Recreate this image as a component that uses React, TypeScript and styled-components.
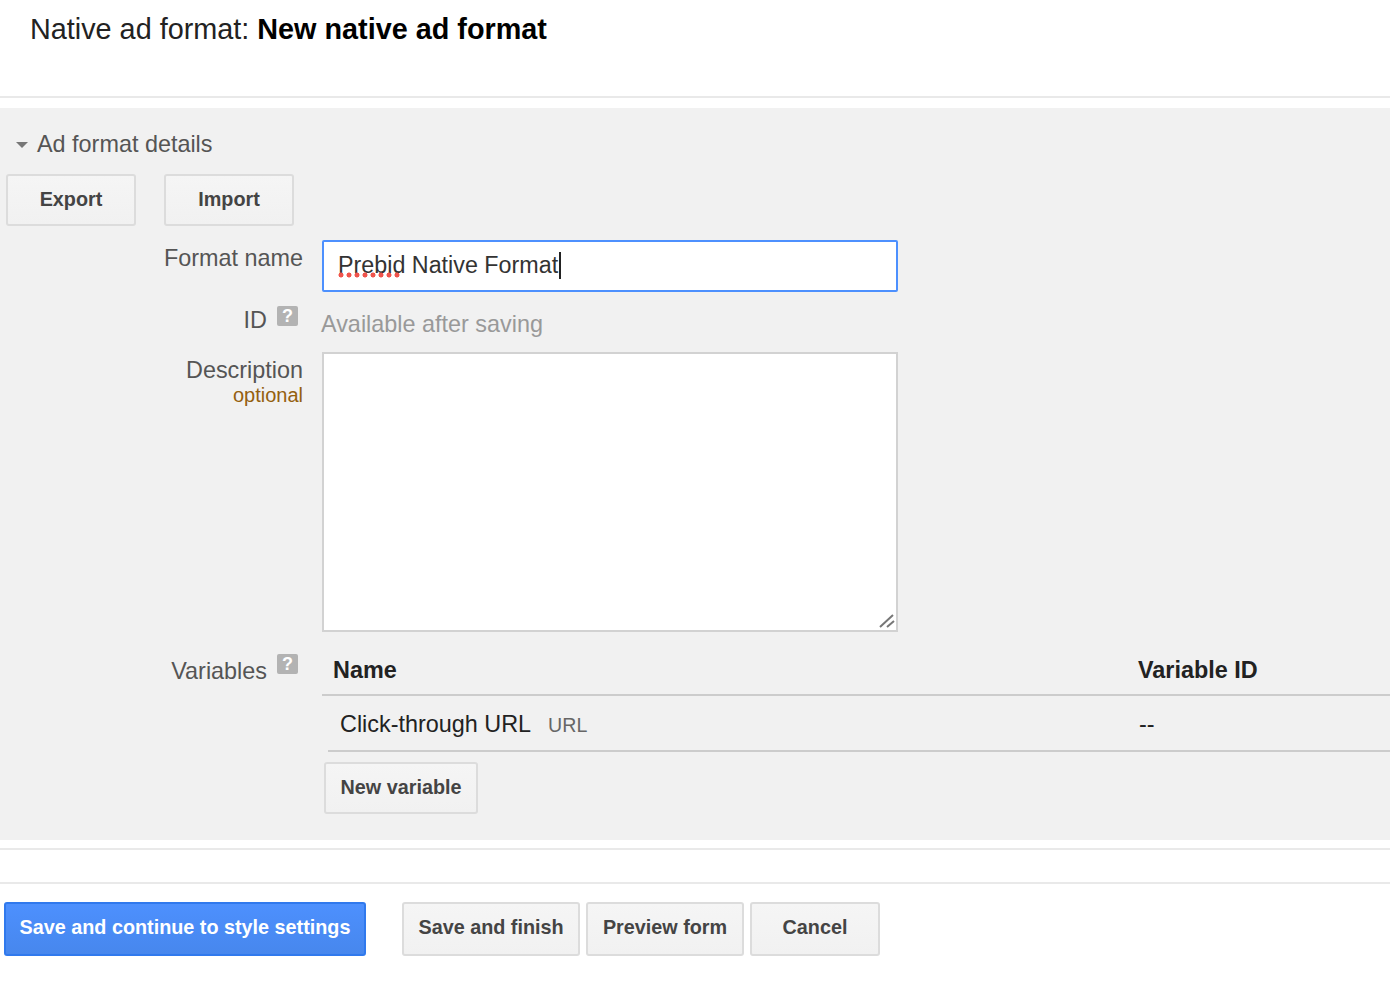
import styled, { createGlobalStyle } from 'styled-components';

const GlobalStyle = createGlobalStyle`
  html, body {
    margin: 0;
    padding: 0;
    background: #fff;
    font-family: "Liberation Sans", Arial, sans-serif;
    color: #444;
  }
  * { box-sizing: border-box; }
`;

const Page = styled.div`
  width: 1390px;
  height: 984px;
  overflow: hidden;
`;

const Header = styled.div`
  height: 98px;
  padding: 12px 0 0 30px;
  border-bottom: 2px solid #e9e9e9;
`;

const Title = styled.h1`
  margin: 0;
  font-size: 28.8px;
  line-height: 34px;
  font-weight: 400;
  color: #222;
  b { color: #000; }
`;

const Panel = styled.section`
  margin-top: 10px;
  height: 732px;
  background: #f1f1f1;
  padding-top: 22px;
`;

const SectionHead = styled.div`
  display: flex;
  align-items: center;
  height: 28px;
  padding-left: 16px;
  font-size: 23.4px;
  color: #555;
`;

const Caret = styled.span`
  width: 0;
  height: 0;
  margin: 2px 9px 0 0;
  border-left: 6px solid transparent;
  border-right: 6px solid transparent;
  border-top: 6px solid #777;
`;

const ButtonRow = styled.div`
  display: flex;
  gap: 28px;
  margin-top: 16px;
  padding-left: 6px;
`;

const Button = styled.button<{ $w: number }>`
  width: ${(p) => p.$w}px;
  height: 52px;
  padding: 0 0 2px;
  font-family: inherit;
  font-size: 19.8px;
  font-weight: 700;
  color: #444;
  background: linear-gradient(#f5f5f5, #f1f1f1);
  border: 2px solid #dcdcdc;
  border-radius: 3px;
`;

const Row = styled.div<{ $h: number; $top: number }>`
  display: grid;
  grid-template-columns: 322px 1fr;
  height: ${(p) => p.$h}px;
  margin-top: ${(p) => p.$top}px;
`;

const LabelCell = styled.div<{ $pad: number }>`
  display: flex;
  flex-direction: column;
  align-items: flex-end;
  padding: ${(p) => p.$pad}px 19px 0 0;
  font-size: 23.4px;
  line-height: 28px;
  color: #555;
`;

const LabelLine = styled.div`
  display: flex;
  align-items: flex-start;
`;

const Optional = styled.div`
  font-size: 20px;
  line-height: 24px;
  margin-top: -1px;
  color: #94600f;
`;

const Help = styled.span<{ $lift: number }>`
  display: flex;
  align-items: center;
  justify-content: center;
  width: 21px;
  height: 20px;
  margin: ${(p) => -p.$lift}px 5px 0 10px;
  background: #b3b3b3;
  border-radius: 2px;
  color: #fff;
  font-size: 18px;
  font-weight: 700;
  line-height: 20px;
`;

const NameInput = styled.div`
  display: flex;
  align-items: center;
  width: 576px;
  height: 52px;
  padding: 0 0 2px 14px;
  background: #fff;
  border: 2px solid #4d90fe;
  border-radius: 2px;
  font-size: 23.3px;
  color: #333;
`;

const Misspelled = styled.span`
  position: relative;

  &::after {
    content: '';
    position: absolute;
    left: 0;
    right: 3px;
    bottom: 1px;
    height: 6px;
    background: radial-gradient(circle at 3px 3px, #f0544c 2.2px, transparent 2.8px) 0 0 / 8px 6px repeat-x;
  }
`;

const Cursor = styled.span`
  width: 2px;
  height: 27px;
  margin-left: 1px;
  background: #222;
`;

const Muted = styled.div`
  margin: 18px 0 0 -1px;
  font-size: 23.4px;
  line-height: 28px;
  color: #999;
`;

const DescriptionBox = styled.div`
  position: relative;
  width: 576px;
  height: 280px;
`;

const Description = styled.textarea`
  display: block;
  width: 100%;
  height: 100%;
  background: #fff;
  border: 2px solid #d2d2d2;
  border-radius: 0;
  outline: none;
  resize: none;
`;

const Grip = styled.svg`
  position: absolute;
  right: 2px;
  bottom: 2px;
  width: 18px;
  height: 18px;
`;

const TableArea = styled.div`
  display: flex;
  flex-direction: column;
`;

const HeadRow = styled.div`
  display: grid;
  grid-template-columns: 805px 1fr;
  height: 48px;
  padding: 8px 0 0 11px;
  border-bottom: 2px solid #ccc;
  font-size: 23.4px;
  line-height: 28px;
  font-weight: 700;
  color: #222;
`;

const BodyRow = styled.div`
  display: grid;
  grid-template-columns: 799px 1fr;
  height: 56px;
  margin-left: 6px;
  padding: 14px 0 0 12px;
  border-bottom: 2px solid #ccc;
  font-size: 23.4px;
  line-height: 28px;
  color: #222;
`;

const TypeTag = styled.span`
  margin-left: 17px;
  font-size: 19.6px;
  color: #666;
`;

const NewVariable = styled(Button)`
  margin: 10px 0 0 2px;
`;

const Rule = styled.div<{ $top: number }>`
  height: 2px;
  margin-top: ${(p) => p.$top}px;
  background: #e9e9e9;
`;

const Footer = styled.div`
  display: flex;
  gap: 6px;
  margin-top: 18px;
  padding-left: 4px;
`;

const FooterButton = styled(Button)`
  height: 54px;
  padding-bottom: 4px;
`;

const PrimaryButton = styled(FooterButton)`
  margin-right: 30px;
  color: #fff;
  background: linear-gradient(#4d90fe, #4787ed);
  border: 2px solid #3079ed;
`;

export default function App() {
  return (
    <Page>
      <GlobalStyle />
      <Header>
        <Title>
          Native ad format: <b>New native ad format</b>
        </Title>
      </Header>
      <Panel>
        <SectionHead>
          <Caret />
          Ad format details
        </SectionHead>
        <ButtonRow>
          <Button $w={130}>Export</Button>
          <Button $w={130}>Import</Button>
        </ButtonRow>
        <Row $h={52} $top={14}>
          <LabelCell $pad={4}>Format name</LabelCell>
          <NameInput>
            <Misspelled>Prebid</Misspelled>&nbsp;Native Format
            <Cursor />
          </NameInput>
        </Row>
        <Row $h={60} $top={0}>
          <LabelCell $pad={14}>
            <LabelLine>
              ID
              <Help $lift={0}>?</Help>
            </LabelLine>
          </LabelCell>
          <Muted>Available after saving</Muted>
        </Row>
        <Row $h={280} $top={0}>
          <LabelCell $pad={4}>
            Description
            <Optional>optional</Optional>
          </LabelCell>
          <DescriptionBox>
            <Description />
            <Grip viewBox="0 0 18 18">
              <path d="M2 15 L15 3 M9 15 L16 9" stroke="#777" strokeWidth="2" fill="none" />
            </Grip>
          </DescriptionBox>
        </Row>
        <Row $h={182} $top={16}>
          <LabelCell $pad={9}>
            <LabelLine>
              Variables
              <Help $lift={3}>?</Help>
            </LabelLine>
          </LabelCell>
          <TableArea>
            <HeadRow>
              <span>Name</span>
              <span>Variable ID</span>
            </HeadRow>
            <BodyRow>
              <span>
                Click-through URL<TypeTag>URL</TypeTag>
              </span>
              <span>--</span>
            </BodyRow>
            <NewVariable $w={154}>New variable</NewVariable>
          </TableArea>
        </Row>
      </Panel>
      <Rule $top={8} />
      <Rule $top={32} />
      <Footer>
        <PrimaryButton $w={362}>Save and continue to style settings</PrimaryButton>
        <FooterButton $w={178}>Save and finish</FooterButton>
        <FooterButton $w={158}>Preview form</FooterButton>
        <FooterButton $w={130}>Cancel</FooterButton>
      </Footer>
    </Page>
  );
}
